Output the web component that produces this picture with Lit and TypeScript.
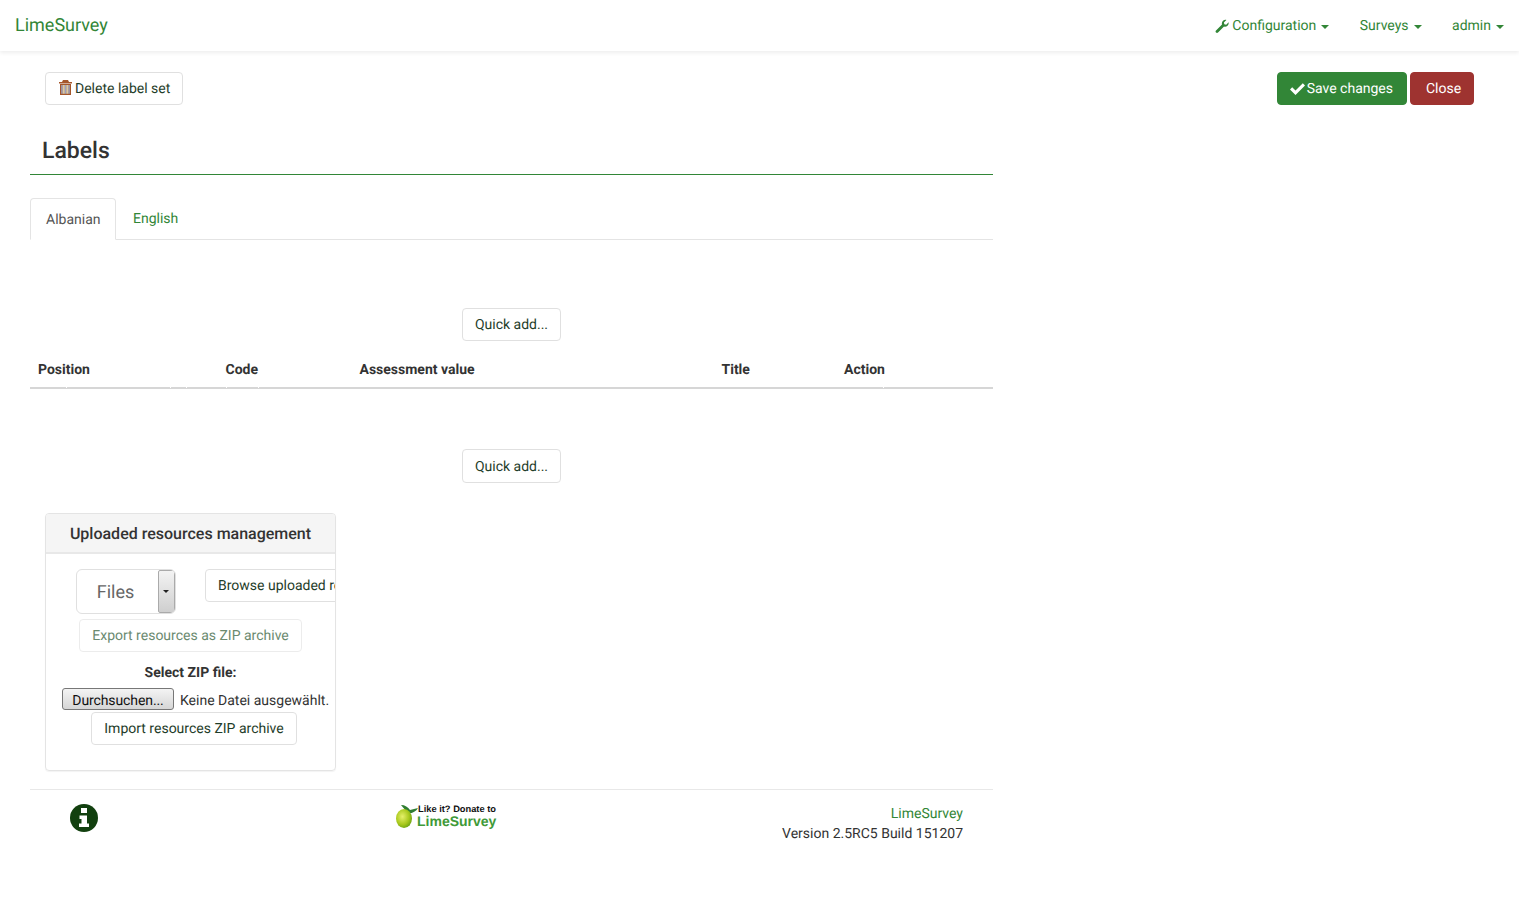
import { LitElement, html, css } from "lit";
import { customElement } from "lit/decorators.js";

const NOTCHES = [36, 140, 156, 196, 228, 853];

@customElement("app-root")
export class AppRoot extends LitElement {
  static styles = css`
    :host { display: block; font: 14px/20px Roboto, "Liberation Sans", sans-serif; color: #333; background: #fff; min-height: 914px; text-rendering: geometricPrecision; }
    * { box-sizing: border-box; }
    .nav { height: 51px; padding: 0 15px; display: flex; align-items: center; justify-content: space-between; box-shadow: 0 2px 4px rgba(0,0,0,.07); color: #328637; }
    .brand { font-size: 18px; }
    .menu { display: flex; gap: 30.5px; }
    .menu span { display: inline-flex; align-items: center; }
    .caret { display: inline-block; width: 0; height: 0; margin-left: 5px; margin-top: 2px; border-top: 4px solid #328637; border-left: 4px solid transparent; border-right: 4px solid transparent; }
    .btn { display: inline-flex; align-items: center; justify-content: center; height: 33px; padding: 1px 12px 0; border: 1px solid #e0e0e0; border-radius: 4px; background: #fff; color: #1f3d2a; font: inherit; white-space: nowrap; }
    .bar { display: flex; justify-content: space-between; padding: 72px 45px 0; height: 105px; margin-top: -51px; }
    .bar .right { display: flex; gap: 3px; }
    .green { background: #328637; border-color: #328637; color: #fff; padding-right: 13px; }
    .green .ico { margin-right: 2px; }
    .red { background: #9e3330; border-color: #9e3330; color: #fff; width: 64px; justify-content: flex-start; padding-left: 15px; }
    .ico { margin-right: 3px; }
    .del { padding-left: 13px; }
    .del .ico { margin-bottom: 3px; }
    .main { margin-left: 30px; width: 963px; }
    h1 { margin: 0; padding: 32px 12px 0; height: 70px; font-size: 23px; line-height: 27px; font-weight: 500; border-bottom: 1px solid #328637; }
    .tabs { display: flex; margin-top: 23px; height: 42px; border-bottom: 1px solid #e4e4e4; }
    .tab { height: 42px; padding: 11px 15px 0; color: #328637; }
    .tab.on { width: 86px; border: 1px solid #e4e4e4; border-bottom-color: #fff; border-radius: 4px 4px 0 0; padding-top: 11px; color: #555; background: #fff; }
    .tab.en { margin-left: 2px; padding-top: 11px; }
    .quick { display: flex; justify-content: center; }
    .q1 { margin-top: 68px; }
    .q2 { margin-top: 60px; }
    .q2 .btn { height: 34px; }
    .th { position: relative; display: grid; grid-template-columns: 187.5px 134px 362px 122.5px 157px; height: 39px; margin-top: 9px; padding: 9px 0 0 8px; border-bottom: 2px solid #d6d6d6; font-weight: 700; line-height: 22px; }
    .th span { display: block; }
    .th i { position: absolute; bottom: -1px; width: 1px; height: 1px; background: #fff; }
    .panel { margin: 30px 0 0 15px; width: 291px; height: 258px; border: 1px solid #e4e4e4; border-radius: 4px; box-shadow: 0 1px 1px rgba(0,0,0,.05); overflow: hidden; }
    .phead { height: 40px; background: #f5f5f5; border-bottom: 2px solid #e8e8e8; font-size: 16px; font-weight: 500; line-height: 39px; text-align: center; }
    .row1 { display: flex; padding: 15px 0 0 30px; align-items: flex-start; white-space: nowrap; }
    .sel { flex: none; display: flex; width: 100px; height: 45px; border: 1px solid #e0e0e0; border-radius: 6px; overflow: hidden; font-size: 18px; color: #666; }
    .sel .v { flex: 1; text-align: center; line-height: 45px; padding-right: 4px; }
    .sel .a { flex: none; width: 17px; border: 1px solid #aaa; border-radius: 2px; padding-right: 1px; background: linear-gradient(#f3f3f3, #cfcfcf); display: flex; align-items: center; justify-content: center; }
    .sel .a i { width: 0; height: 0; border-top: 3px solid #222; border-left: 3px solid transparent; border-right: 3px solid transparent; }
    .browse { margin-left: 29px; flex: none; }
    .center { display: flex; justify-content: center; }
    .exp { margin-top: 5px; color: #6b8a70; border-color: #ececec; }
    .sz { text-align: center; font-weight: 700; margin-top: 10px; height: 20px; line-height: 22px; }
    .file { display: flex; align-items: flex-start; padding-left: 16px; margin-top: 6px; height: 23px; white-space: nowrap; }
    .fb { width: 112px; height: 22px; margin-right: 6px; border: 1px solid #777; border-radius: 3px; background: linear-gradient(#f4f4f4, #d6d6d6); color: #111; text-align: center; line-height: 24px; letter-spacing: -.1px; }
    .fn { margin-top: 3px; }
    .imp { margin-top: 1px; padding-left: 7px; }
    .foot { margin-top: 18px; height: 60px; border-top: 1px solid #e8e8e8; display: grid; grid-template-columns: 321px 321px 291px; }
    .f1 { padding: 14px 0 0 40px; }
    .f2 { padding: 13px 0 0 44px; }
    .f3 { padding-top: 14px; text-align: right; }
    .f3 a { color: #328637; display: block; }
    .l1 { font: 700 9.3px "Liberation Sans", sans-serif; fill: #111; }
    .l2 { font: 700 14px "Liberation Sans", sans-serif; fill: #3f9a38; }
  `;

  render() {
    const caret = html`<i class="caret"></i>`;
    return html`
      <div class="nav">
        <span class="brand">LimeSurvey</span>
        <div class="menu">
          <span>
            <svg class="ico" width="14" height="14" viewBox="0 0 14 14"><path fill="#328637" d="M13.6 3.2c.3 1.3-.1 2.6-1.1 3.5-1 .9-2.3 1.2-3.5.8L3 13.6c-.6.5-1.400.5-2-.1-.6-.6-.6-1.500 0-2L7 5.400C6.600 4.100 7 2.700 8 1.800 8.900.9 10.200.6 11.400.9L8.900 3.400l.4 1.900 1.900.4z"/></svg>
            Configuration${caret}
          </span>
          <span>Surveys${caret}</span>
          <span>admin${caret}</span>
        </div>
      </div>

      <div class="bar">
        <span class="btn del">
          <svg class="ico" width="13" height="15" viewBox="0 0 13 15"><path fill="#a5562a" d="M4 0h5l1 2h3v1.500H0V2h3zM1 4h11v11H1z"/><path fill="#9aa0c0" d="M2.200 5h1.500v8.800H2.200zM5.800 5h1.500v8.800H5.800zM9.300 5h1.500v8.800H9.300z"/><path fill="#d8c9a8" d="M3.700 5h2.100v8.800H3.700zM7.300 5h2v8.800h-2z"/></svg>
          Delete label set
        </span>
        <div class="right">
          <span class="btn green">
            <svg class="ico" width="15" height="12" viewBox="0 0 15 12"><path fill="#fff" d="M0 6.500 2.200 4.300 5.500 7.600 12.800.3 15 2.500 5.500 12z"/></svg>
            Save changes
          </span>
          <span class="btn red">Close</span>
        </div>
      </div>

      <div class="main">
        <h1>Labels</h1>
        <div class="tabs">
          <div class="tab on">Albanian</div>
          <div class="tab en">English</div>
        </div>
        <div class="quick q1"><span class="btn">Quick add...</span></div>
        <div class="th">
          <span>Position</span><span>Code</span><span>Assessment value</span><span>Title</span><span>Action</span>
          ${NOTCHES.map((x) => html`<i style="left:${x}px"></i>`)}
        </div>
        <div class="quick q2"><span class="btn">Quick add...</span></div>
        <div class="panel">
          <div class="phead">Uploaded resources management</div>
          <div class="row1">
            <div class="sel"><span class="v">Files</span><span class="a"><i></i></span></div>
            <span class="btn browse">Browse uploaded resources</span>
          </div>
          <div class="center"><span class="btn exp">Export resources as ZIP archive</span></div>
          <div class="sz">Select ZIP file:</div>
          <div class="file"><span class="fb">Durchsuchen...</span><span class="fn">Keine Datei ausgewählt.</span></div>
          <div class="center imp"><span class="btn">Import resources ZIP archive</span></div>
        </div>
        <div class="foot">
          <div class="f1">
            <svg width="28" height="28" viewBox="0 0 28 28"><circle cx="14" cy="14" r="14" fill="#12400f"/><path fill="#fff" d="M11 4h6v5h-6zM9.500 11.500h7.500v8h2v3.500H9v-3.500h2.500v-4.500h-2z"/></svg>
          </div>
          <div class="f2">
            <svg width="104" height="28" viewBox="0 0 104 28" role="img">
              <defs><radialGradient id="lime" cx=".4" cy=".4" r=".7"><stop offset="0" stop-color="#e6f06a"/><stop offset=".6" stop-color="#a8c81c"/><stop offset="1" stop-color="#5f9a10"/></radialGradient></defs>
              <path fill="#2f7d32" d="M6 2c4 0 7 2 9 5l8-2c-2 4-7 6-11 5-1-3-4-5-6-8z"/>
              <ellipse cx="9" cy="15.500" rx="8" ry="9.500" fill="url(#lime)"/>
              <text class="l1" x="23" y="9">Like it? Donate to</text>
              <text class="l2" x="22" y="23">LimeSurvey</text>
            </svg>
          </div>
          <div class="f3"><a>LimeSurvey</a>Version 2.5RC5 Build 151207</div>
        </div>
      </div>
    `;
  }
}
